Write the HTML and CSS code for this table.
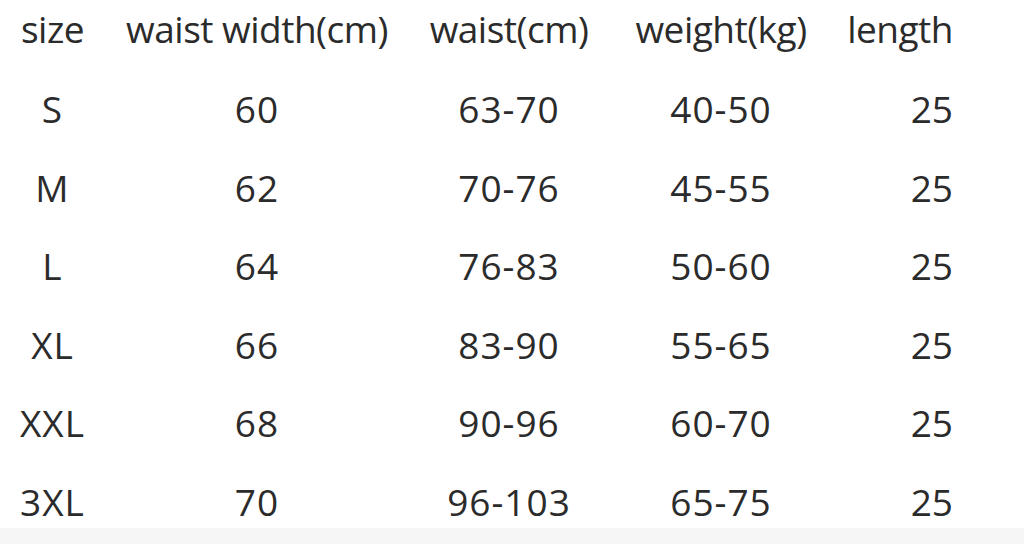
FILE: index.html
```html
<!DOCTYPE html>
<html lang="en">
<head>
<meta charset="utf-8">
<title>Size chart</title>
<link rel="stylesheet" href="styles.css">
</head>
<body>
<main class="chart">
  <div class="row head">
    <span class="c1">size</span>
    <span class="c2">waist width(cm)</span>
    <span class="c3">waist(cm)</span>
    <span class="c4">weight(kg)</span>
    <span class="c5">length</span>
  </div>
  <div class="row data">
    <span class="c1">S</span><span class="c2">60</span><span class="c3">63-70</span><span class="c4">40-50</span><span class="c5">25</span>
  </div>
  <div class="row data">
    <span class="c1">M</span><span class="c2">62</span><span class="c3">70-76</span><span class="c4">45-55</span><span class="c5">25</span>
  </div>
  <div class="row data">
    <span class="c1">L</span><span class="c2">64</span><span class="c3">76-83</span><span class="c4">50-60</span><span class="c5">25</span>
  </div>
  <div class="row data">
    <span class="c1">XL</span><span class="c2">66</span><span class="c3">83-90</span><span class="c4">55-65</span><span class="c5">25</span>
  </div>
  <div class="row data">
    <span class="c1">XXL</span><span class="c2">68</span><span class="c3">90-96</span><span class="c4">60-70</span><span class="c5">25</span>
  </div>
  <div class="row data">
    <span class="c1">3XL</span><span class="c2">70</span><span class="c3">96-103</span><span class="c4">65-75</span><span class="c5">25</span>
  </div>
</main>
</body>
</html>
```
FILE: styles.css
```css
html, body {
  margin: 0;
  padding: 0;
}
body {
  width: 1024px;
  height: 544px;
  overflow: hidden;
  background: linear-gradient(to bottom, #ffffff 0, #ffffff 528px, #f6f6f6 528px, #f6f6f6 544px);
  font-family: "Open Sans", "Noto Sans", "Liberation Sans", sans-serif;
  color: #2b2b2b;
}
.chart {
  display: flex;
  flex-direction: column;
}
.row {
  display: grid;
  grid-template-columns: 105px 304px 200px 224px 120px;
  font-size: 37px;
}
.row span {
  text-align: center;
  white-space: nowrap;
}
.row .c5 {
  text-align: right;
}
.head {
  line-height: 57px;
  margin-bottom: 13px;
  letter-spacing: -0.5px;
}
.data {
  line-height: 78.5px;
  letter-spacing: 1px;
}
.data .c5 {
  letter-spacing: 0;
}
```
